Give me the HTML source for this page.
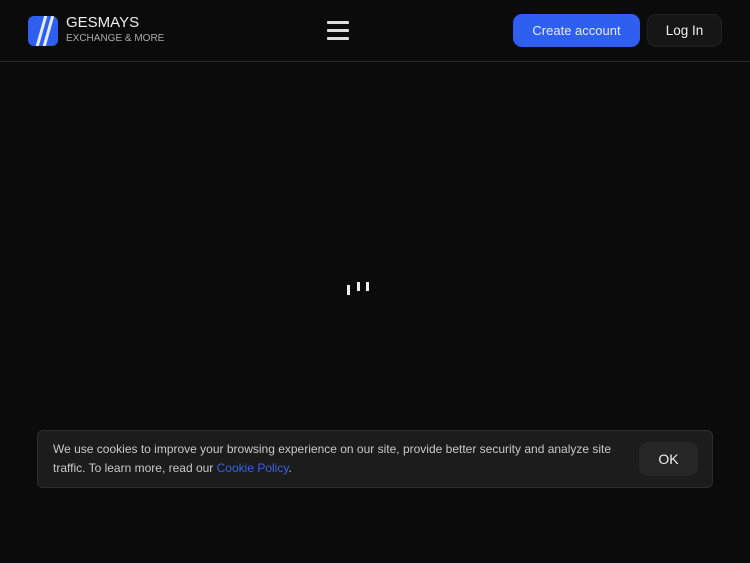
<!DOCTYPE html>
<html><head><style>
*{margin:0;padding:0;box-sizing:border-box}
body{width:750px;height:563px;background:#0b0b0b;font-family:"Liberation Sans",sans-serif;position:relative;overflow:hidden;color:#fff}
.hdr{position:absolute;left:0;top:0;width:750px;height:62px;border-bottom:1px solid #2a2a2a;background:#0b0b0b}
.logo{position:absolute;left:28px;top:16px;width:30px;height:30px;border-radius:6px;background:#2f5ff0;overflow:hidden}
.t1{position:absolute;left:66px;top:14px;font-size:15px;color:#eee}
.t2{position:absolute;left:66px;top:33px;font-size:10px;color:#aaa}
.burger{position:absolute;left:327px;top:21px;width:22px}
.burger div{height:2.5px;background:#ddd;margin-bottom:5.5px;border-radius:1px}
.ca{position:absolute;left:513px;top:14px;width:127px;height:33px;border-radius:9px;background:#2f5ff0;font-size:13px;color:#e8ecff;text-align:center;line-height:33px}
.li{position:absolute;left:647px;top:14px;width:75px;height:33px;border-radius:9px;background:#161616;border:1px solid #222;font-size:13.5px;color:#eee;text-align:center;line-height:31px}
.b{position:absolute;width:3px;background:#eee}
.ck{position:absolute;left:37px;top:430px;width:676px;height:58px;border-radius:6px;background:#1c1c1c;border:1px solid #2c2c2c}
.ck p{position:absolute;left:15px;top:9px;width:580px;font-size:12px;line-height:18.5px;color:#c8c8c8}
.ck a{color:#3a62e6;text-decoration:none}
.ok{position:absolute;left:601px;top:11px;width:59px;height:34px;border-radius:9px;background:#262626;font-size:14px;color:#eee;text-align:center;line-height:34px}
</style></head><body>
<div class="hdr">
<div class="logo"><svg width="30" height="30"><path d="M9 31 L18 -1" stroke="#e6ecff" stroke-width="3"/><path d="M16 31 L25 -1" stroke="#e6ecff" stroke-width="3"/></svg></div>
<div class="t1">GESMAYS</div><div class="t2">EXCHANGE &amp; MORE</div>
<div class="burger"><div></div><div></div><div></div></div>
<div class="ca">Create account</div>
<div class="li">Log In</div>
</div>
<div class="b" style="left:347px;top:285px;height:10px"></div>
<div class="b" style="left:357px;top:282px;height:9px"></div>
<div class="b" style="left:366px;top:282px;height:9px"></div>
<div class="ck"><p>We use cookies to improve your browsing experience on our site, provide better security and analyze site traffic. To learn more, read our <a>Cookie Policy</a>.</p><div class="ok">OK</div></div>
</body></html>
